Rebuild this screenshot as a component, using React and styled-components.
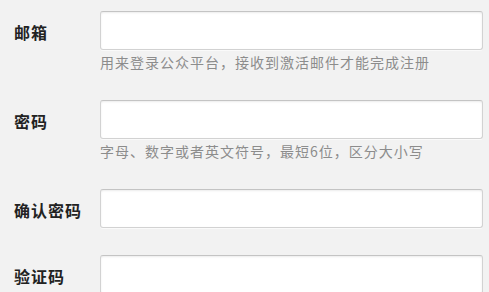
import React from "react";
import styled, { createGlobalStyle } from "styled-components";

const GlobalStyle = createGlobalStyle`
  html, body {
    margin: 0;
    padding: 0;
    background: #f2f2f2;
  }
  body {
    font-family: "Noto Sans CJK SC", "Liberation Sans", sans-serif;
  }
`;

const Form = styled.form`
  width: 489px;
  height: 292px;
  overflow: hidden;
  padding: 11px 6px 0 14px;
  box-sizing: border-box;
  background: #f2f2f2;
`;

const Row = styled.div`
  display: grid;
  grid-template-columns: 86px 1fr;
  align-items: start;
  margin-bottom: 27px;
`;

const Label = styled.label`
  font-size: 16px;
  font-weight: 700;
  letter-spacing: 1px;
  color: #222;
  height: 39px;
  box-sizing: border-box;
  line-height: 35px;
  padding-top: 4px;
  white-space: nowrap;
`;

const Field = styled.div`
  display: flex;
  flex-direction: column;
`;

const Input = styled.input`
  height: 39px;
  box-sizing: border-box;
  width: 100%;
  border: 1px solid #d2d2d2;
  border-top-color: #c4c4c4;
  border-radius: 3px;
  background: #fff;
  box-shadow: inset 0 1px 2px rgba(0, 0, 0, 0.08), 0 1px 0 rgba(255, 255, 255, 0.6);
  outline: none;
  padding: 0 8px;
  font-size: 14px;
`;

const Hint = styled.div`
  margin-top: 2px;
  height: 21px;
  line-height: 20px;
  font-size: 14px;
  letter-spacing: 1px;
  color: #8c8c8c;
  white-space: nowrap;
`;

const fields = [
  { label: "邮箱", type: "text", hint: "用来登录公众平台，接收到激活邮件才能完成注册" },
  { label: "密码", type: "password", hint: "字母、数字或者英文符号，最短6位，区分大小写" },
  { label: "确认密码", type: "password" },
  { label: "验证码", type: "text" },
];

export default function App() {
  return (
    <>
      <GlobalStyle />
      <Form>
        {fields.map((f) => (
          <Row key={f.label}>
            <Label>{f.label}</Label>
            <Field>
              <Input type={f.type} />
              {f.hint && <Hint>{f.hint}</Hint>}
            </Field>
          </Row>
        ))}
      </Form>
    </>
  );
}
